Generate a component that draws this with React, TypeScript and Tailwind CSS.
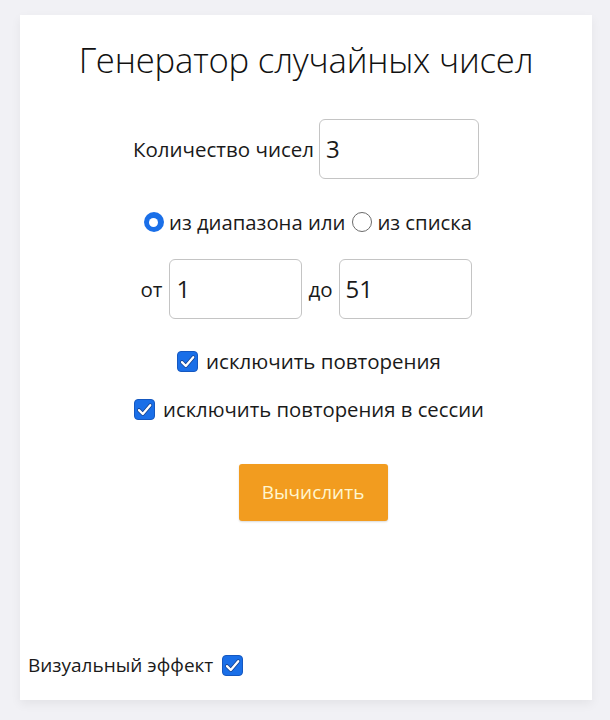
import React from "react";

function Check() {
  return (
    <span className="inline-flex h-[21px] w-[21px] shrink-0 items-center justify-center rounded-[4px] border border-[#1558c0] bg-[#1a6fe8]">
      <svg viewBox="0 0 16 16" className="h-[17px] w-[17px]" fill="none">
        <path d="M2.8 8.6l3.6 3.6L13.4 4" stroke="#12408f" strokeWidth="3.6" strokeLinecap="round" strokeLinejoin="round" />
        <path d="M2.8 8.6l3.6 3.6L13.4 4" stroke="#ffffff" strokeWidth="2.2" strokeLinecap="round" strokeLinejoin="round" />
      </svg>
    </span>
  );
}

function Radio(props: { checked?: boolean }) {
  return props.checked ? (
    <span className="inline-flex h-[20px] w-[20px] shrink-0 items-center justify-center rounded-full bg-[#1a6fe8]">
      <span className="block h-[9px] w-[9px] rounded-full bg-white" />
    </span>
  ) : (
    <span className="block h-[20px] w-[20px] shrink-0 rounded-full border-[1.5px] border-[#6b6b6b] bg-white" />
  );
}

function Field(props: { value: string; w: string }) {
  return (
    <div className={`flex h-[60px] ${props.w} items-center rounded-[6px] border border-[#c4c4c4] bg-white px-[6px] text-[24px] text-[#1a1a1a]`}>
      {props.value}
    </div>
  );
}

export default function App() {
  return (
    <div className="h-[720px] w-[610px] overflow-hidden bg-[#f1f1f5] pt-[15px] pl-[20px] font-['Open_Sans',sans-serif] text-[#1a1a1a]">
      <div className="flex h-[685px] w-[572px] flex-col items-center bg-white shadow-[0_4px_10px_rgba(0,0,0,0.06)]">
        <h1 className="mt-[23px] h-[44px] text-[34.7px] leading-[44px] font-light tracking-[-0.2px] text-[#111]">
          Генератор случайных чисел
        </h1>

        <div className="mt-[37px] flex items-center gap-[5px] text-[20.5px]">
          <span>Количество чисел</span>
          <Field value="3" w="w-[160px]" />
        </div>

        <div className="mt-[31px] ml-[4px] flex h-[24px] items-center text-[20.3px]">
          <Radio checked />
          <span className="ml-[5px]">из диапазона или</span>
          <span className="ml-[7px]"><Radio /></span>
          <span className="ml-[5px]">из списка</span>
        </div>

        <div className="mt-[25px] flex items-center text-[20.5px]">
          <span>от</span>
          <span className="ml-[7px]"><Field value="1" w="w-[133px]" /></span>
          <span className="ml-[6px]">до</span>
          <span className="ml-[6px]"><Field value="51" w="w-[133px]" /></span>
        </div>

        <div className="mt-[30px] ml-[6px] flex h-[24px] items-center gap-[8px] text-[20.5px]">
          <Check />
          <span>исключить повторения</span>
        </div>

        <div className="mt-[24px] ml-[6px] flex h-[24px] items-center gap-[8px] text-[20.3px]">
          <Check />
          <span>исключить повторения в сессии</span>
        </div>

        <button
          type="button"
          className="mt-[43px] ml-[14px] h-[57px] w-[149px] rounded-[3px] bg-[#f29c1f] text-[19px] text-[#fff6cf] shadow-[0_1px_2px_rgba(0,0,0,0.15)]"
        >
          Вычислить
        </button>

        <div className="mt-auto mb-[23px] flex h-[24px] items-center gap-[9px] self-start pl-[8px] text-[19px]">
          <span>Визуальный эффект</span>
          <Check />
        </div>
      </div>
    </div>
  );
}
